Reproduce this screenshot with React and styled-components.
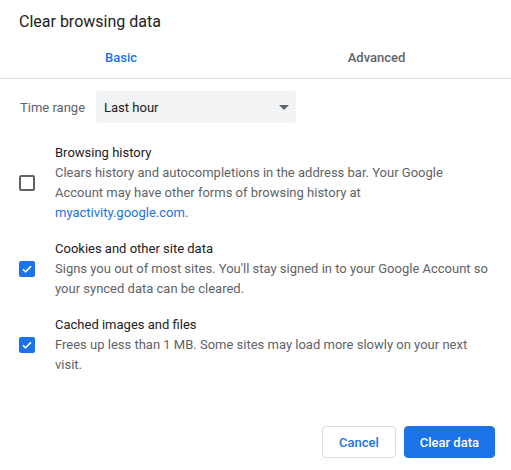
import styled, { createGlobalStyle } from "styled-components"

const GlobalStyle = createGlobalStyle`
    html, body {
        margin: 0;
        padding: 0;
        background: #fff;
        font-family: Roboto, "Noto Sans", "Liberation Sans", sans-serif;
        color: #202124;
    }
`

const Dialog = styled.div`
    display: flex;
    flex-direction: column;
    width: 511px;
    min-height: 470px;
    box-sizing: border-box;
`

const Title = styled.h1`
    margin: 0;
    padding: 12px 19px 0;
    font-size: 16px;
    line-height: 20px;
    font-weight: 400;
    color: #202124;
`

const Tabs = styled.div`
    display: flex;
    margin-top: 4px;
    border-bottom: 1px solid #e0e0e0;
`

const Tab = styled.div`
    display: flex;
    align-items: center;
    justify-content: center;
    width: ${(p) => p.$width}px;
    height: 42px;
    font-size: 13px;
    font-weight: 500;
    color: ${(p) => (p.$active ? "#1a73e8" : "#5f6368")};
`

const RangeRow = styled.div`
    display: flex;
    align-items: center;
    gap: 11px;
    padding: 12px 20px 0;
`

const Label = styled.span`
    font-size: 13px;
    color: #5f6368;
`

const Select = styled.div`
    display: flex;
    align-items: center;
    justify-content: space-between;
    width: 200px;
    height: 32px;
    box-sizing: border-box;
    padding: 0 6px 0 8px;
    background: #f1f3f4;
    border-radius: 4px;
    font-size: 13px;
    color: #202124;
`

const Arrow = styled.span`
    width: 0;
    height: 0;
    margin-right: 1px;
    border-left: 5px solid transparent;
    border-right: 5px solid transparent;
    border-top: 5px solid #5f6368;
`

const List = styled.div`
    display: flex;
    flex-direction: column;
    margin-top: 12px;
`

const Item = styled.label`
    display: flex;
    align-items: center;
    gap: 20px;
    padding: 8px 20px 8px 19px;
`

const Box = styled.span`
    flex: none;
    display: flex;
    align-items: center;
    justify-content: center;
    width: 16px;
    height: 16px;
    box-sizing: border-box;
    border-radius: 2px;
    background: ${(p) => (p.$checked ? "#1a73e8" : "transparent")};
    border: ${(p) => (p.$checked ? "none" : "2px solid #5f6368")};
`

const ItemText = styled.div`
    display: flex;
    flex-direction: column;
    width: 436px;
    font-size: 13px;
    line-height: 20px;
`

const ItemTitle = styled.span`
    color: #202124;
`

const ItemDesc = styled.span`
    color: #5f6368;
`

const Link = styled.a`
    color: #1a73e8;
    text-decoration: none;
`

const Footer = styled.div`
    display: flex;
    justify-content: flex-end;
    gap: 8px;
    margin-top: auto;
    padding: 0 16px 12px;
`

const Button = styled.button`
    height: 32px;
    padding: 0 ${(p) => (p.$primary ? 15 : 16)}px;
    border-radius: 4px;
    font-family: inherit;
    font-size: 13px;
    font-weight: 500;
    cursor: pointer;
    border: 1px solid ${(p) => (p.$primary ? "#1a73e8" : "#dadce0")};
    background: ${(p) => (p.$primary ? "#1a73e8" : "#fff")};
    color: ${(p) => (p.$primary ? "#fff" : "#1a73e8")};
`

function Checkbox({ checked }) {
    return (
        <Box $checked={checked}>
            {checked && (
                <svg width="12" height="12" viewBox="0 0 24 24">
                    <path d="M4 12.5l5 5L20 6.5" fill="none" stroke="#fff" strokeWidth="3.4" />
                </svg>
            )}
        </Box>
    )
}

const items = [
    {
        title: "Browsing history",
        desc: (
            <>
                Clears history and autocompletions in the address bar. Your Google Account may have other forms of browsing history at{" "}
                <Link href="#">myactivity.google.com</Link>.
            </>
        ),
        checked: false,
    },
    {
        title: "Cookies and other site data",
        desc: "Signs you out of most sites. You'll stay signed in to your Google Account so your synced data can be cleared.",
        checked: true,
    },
    {
        title: "Cached images and files",
        desc: "Frees up less than 1 MB. Some sites may load more slowly on your next visit.",
        checked: true,
    },
]

export default function App() {
    return (
        <>
            <GlobalStyle />
            <Dialog>
                <Title>Clear browsing data</Title>
                <Tabs>
                    <Tab $active $width={242}>Basic</Tab>
                    <Tab $width={269}>Advanced</Tab>
                </Tabs>
                <RangeRow>
                    <Label>Time range</Label>
                    <Select>
                        Last hour
                        <Arrow />
                    </Select>
                </RangeRow>
                <List>
                    {items.map((item) => (
                        <Item key={item.title}>
                            <Checkbox checked={item.checked} />
                            <ItemText>
                                <ItemTitle>{item.title}</ItemTitle>
                                <ItemDesc>{item.desc}</ItemDesc>
                            </ItemText>
                        </Item>
                    ))}
                </List>
                <Footer>
                    <Button>Cancel</Button>
                    <Button $primary>Clear data</Button>
                </Footer>
            </Dialog>
        </>
    )
}
